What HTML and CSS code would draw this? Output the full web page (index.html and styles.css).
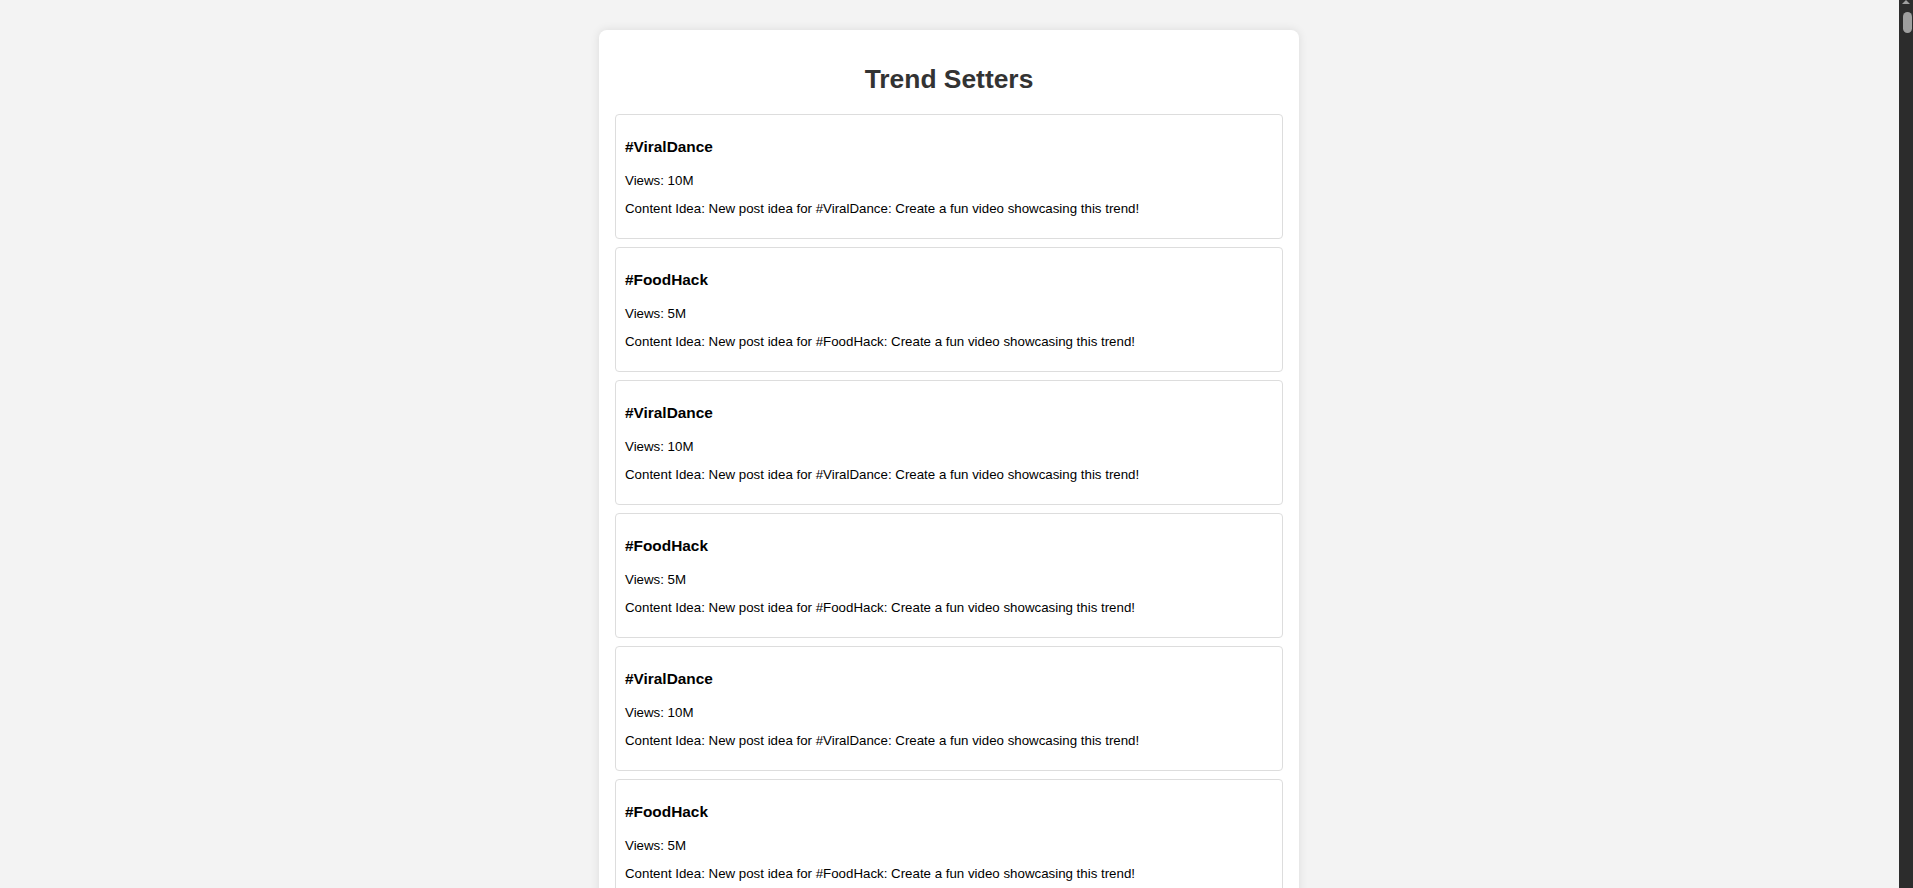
FILE: index.html
```html
<!DOCTYPE html>
<html lang="en">
<head>
<meta charset="UTF-8">
<title>Trend Setters</title>
<link rel="stylesheet" href="styles.css">
</head>
<body>
<div class="container">
  <h1 class="title">Trend Setters</h1>
  <div class="trend-list">
    <div class="trend">
      <h3>#ViralDance</h3>
      <p>Views: 10M</p>
      <p>Content Idea: New post idea for #ViralDance: Create a fun video showcasing this trend!</p>
    </div>
    <div class="trend">
      <h3>#FoodHack</h3>
      <p>Views: 5M</p>
      <p>Content Idea: New post idea for #FoodHack: Create a fun video showcasing this trend!</p>
    </div>
    <div class="trend">
      <h3>#ViralDance</h3>
      <p>Views: 10M</p>
      <p>Content Idea: New post idea for #ViralDance: Create a fun video showcasing this trend!</p>
    </div>
    <div class="trend">
      <h3>#FoodHack</h3>
      <p>Views: 5M</p>
      <p>Content Idea: New post idea for #FoodHack: Create a fun video showcasing this trend!</p>
    </div>
    <div class="trend">
      <h3>#ViralDance</h3>
      <p>Views: 10M</p>
      <p>Content Idea: New post idea for #ViralDance: Create a fun video showcasing this trend!</p>
    </div>
    <div class="trend">
      <h3>#FoodHack</h3>
      <p>Views: 5M</p>
      <p>Content Idea: New post idea for #FoodHack: Create a fun video showcasing this trend!</p>
    </div>
    <div class="trend">
      <h3>#ViralDance</h3>
      <p>Views: 10M</p>
      <p>Content Idea: New post idea for #ViralDance: Create a fun video showcasing this trend!</p>
    </div>
  </div>
</div>
<div class="scrollbar" aria-hidden="true">
  <div class="scroll-arrow"></div>
  <div class="scroll-thumb"></div>
</div>
</body>
</html>
```

FILE: styles.css
```css
html {
  background: #f3f3f3;
}
body {
  margin: 0;
  padding: 30px 15px 30px 0;
  font-family: "Liberation Sans", Arial, sans-serif;
  font-size: 13.3px;
  background: #f3f3f3;
}
.container {
  width: 700px;
  box-sizing: border-box;
  margin: 0 auto;
  background: #fff;
  padding: 17px 16px 16px;
  border-radius: 8px;
  box-shadow: 0 0 10px rgba(0, 0, 0, 0.1);
}
.title {
  text-align: center;
  color: #333;
  font-size: 26.4px;
  margin: 17px 0 19px;
}
.trend {
  border: 1px solid #ddd;
  border-radius: 4px;
  padding: 9px;
  margin-bottom: 8px;
}
.trend h3 {
  font-size: 15.4px;
  margin: 14px 0 17px;
  color: #000;
}
.trend p {
  margin: 13px 0;
  color: #000;
}
.scrollbar {
  position: fixed;
  top: 0;
  right: 0;
  width: 14px;
  height: 100%;
  background: #2c2c2c;
}
.scroll-arrow {
  margin: 0 auto;
  width: 0;
  height: 0;
  border-left: 4px solid transparent;
  border-right: 4px solid transparent;
  border-bottom: 4px solid #9f9f9f;
}
.scroll-thumb {
  margin: 8px 0 0 4px;
  width: 9px;
  height: 21px;
  border-radius: 5px;
  background: #9f9f9f;
}
```
